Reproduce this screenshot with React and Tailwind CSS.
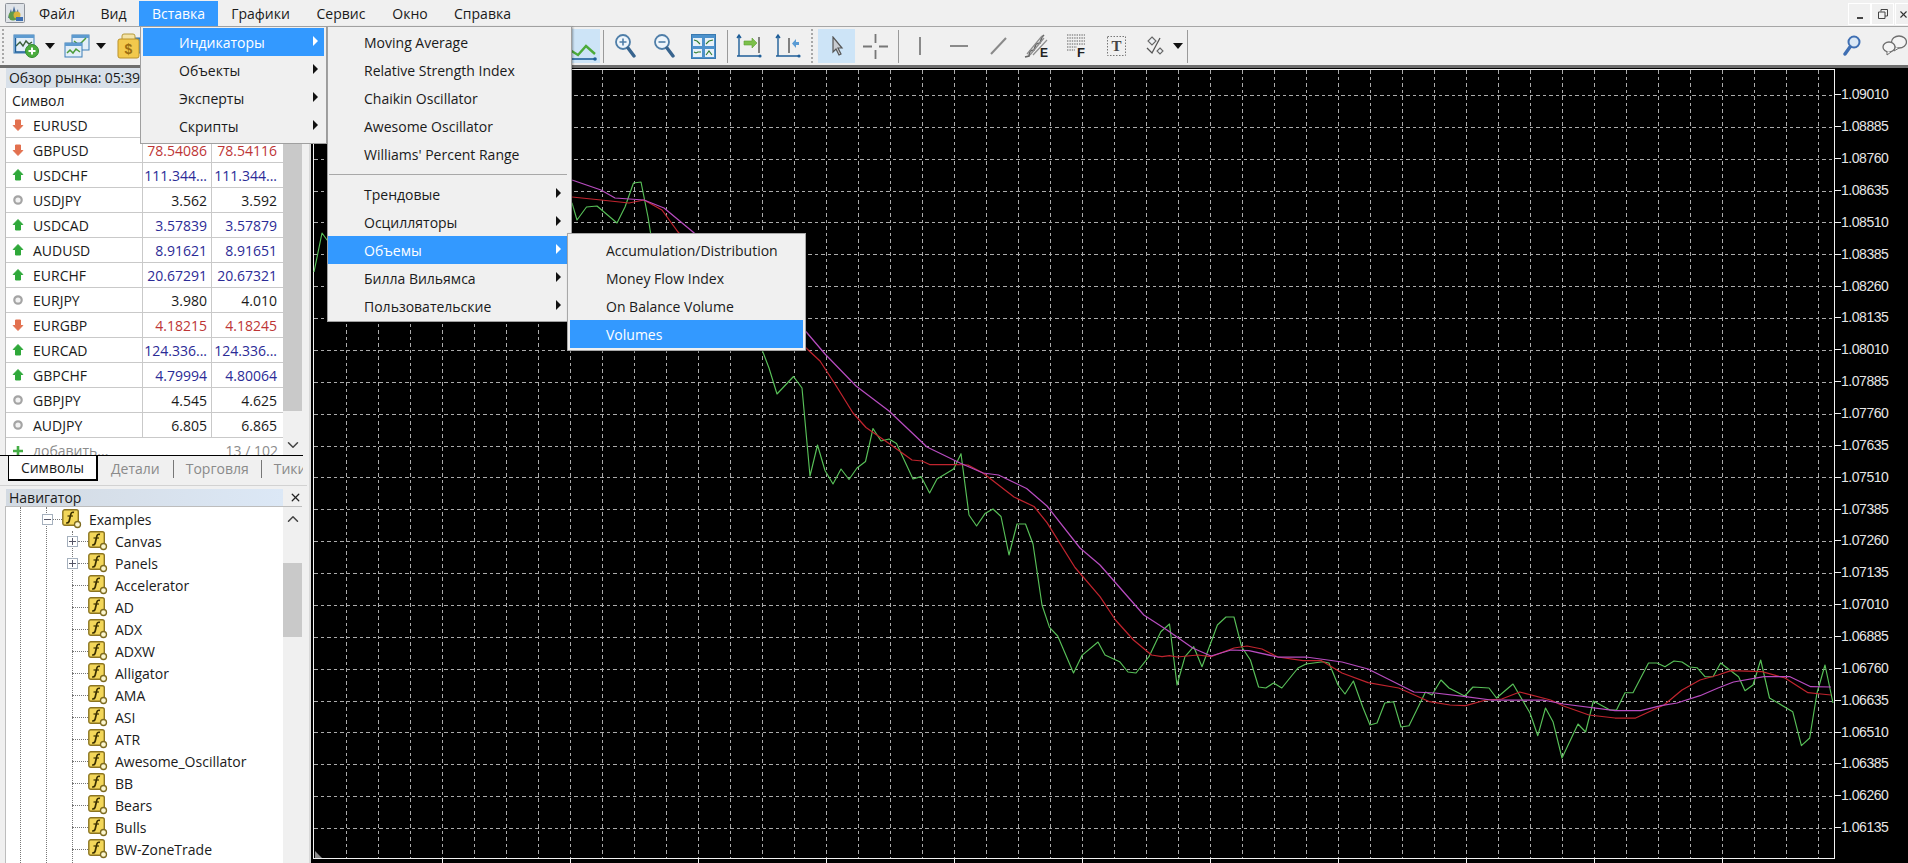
import { ChevronDown, ChevronUp, X } from "lucide-react";

const menuBar = [
  { label: "Файл", w: "w-[62px]" },
  { label: "Вид", w: "w-[51px]" },
  { label: "Вставка", w: "w-[79px]", active: true },
  { label: "Графики", w: "w-[85px]" },
  { label: "Сервис", w: "w-[76px]" },
  { label: "Окно", w: "w-[62px]" },
  { label: "Справка", w: "w-[83px]" },
];

const quotes = [
  { s: "EURUSD", dir: "down", bid: "", ask: "" },
  { s: "GBPUSD", dir: "down", bid: "78.54086", ask: "78.54116" },
  { s: "USDCHF", dir: "up", bid: "111.344...", ask: "111.344..." },
  { s: "USDJPY", dir: "flat", bid: "3.562", ask: "3.592" },
  { s: "USDCAD", dir: "up", bid: "3.57839", ask: "3.57879" },
  { s: "AUDUSD", dir: "up", bid: "8.91621", ask: "8.91651" },
  { s: "EURCHF", dir: "up", bid: "20.67291", ask: "20.67321" },
  { s: "EURJPY", dir: "flat", bid: "3.980", ask: "4.010" },
  { s: "EURGBP", dir: "down", bid: "4.18215", ask: "4.18245" },
  { s: "EURCAD", dir: "up", bid: "124.336...", ask: "124.336..." },
  { s: "GBPCHF", dir: "up", bid: "4.79994", ask: "4.80064" },
  { s: "GBPJPY", dir: "flat", bid: "4.545", ask: "4.625" },
  { s: "AUDJPY", dir: "flat", bid: "6.805", ask: "6.865" },
];

const valueColor = {
  up: "text-[#2b2b96]",
  down: "text-[#bd3535]",
  flat: "text-[#1a1a1a]",
};

const treeItems = [
  "Accelerator",
  "AD",
  "ADX",
  "ADXW",
  "Alligator",
  "AMA",
  "ASI",
  "ATR",
  "Awesome_Oscillator",
  "BB",
  "Bears",
  "Bulls",
  "BW-ZoneTrade",
];

const prices = [
  "1.09010", "1.08885", "1.08760", "1.08635", "1.08510", "1.08385", "1.08260", "1.08135",
  "1.08010", "1.07885", "1.07760", "1.07635", "1.07510", "1.07385", "1.07260", "1.07135",
  "1.07010", "1.06885", "1.06760", "1.06635", "1.06510", "1.06385", "1.06260", "1.06135",
];

const green =
  "314,272 322,233 327,240 400,200 572,203 577,220 586.5,207 597,206 617,223 625,207 633.5,183 641,182 648,217 650.6,233 700,300 761,347 769,368 777,394 793.5,376.5 802,388 810,476 817.5,445 825,470.5 833,484 841,469 849,479.5 857,468 865.5,461.5 873,428.5 881,441 889,439 896.5,443.6 913,479 921,476.6 929.6,493 937,479 953.6,469 961,453.7 969,515 976.6,526 985,513.6 993,509 1001,516.5 1009,555 1017,524 1025.5,524 1033,544 1042,605 1049.5,627.4 1057.7,636 1073.5,673 1082,655.4 1098,642 1105,655 1119.6,661.7 1128,672 1136,673 1149,656.7 1160.8,631.7 1169.5,624 1177,685 1185,656.7 1193.7,646.7 1202,666.7 1217.4,625 1226,617 1234,617 1241.6,646.7 1250.4,660 1258.6,687 1265.8,688 1273.6,683 1281.8,688 1298,668 1306,664 1313.7,663 1323,661.7 1329,663 1338,685 1345,694 1353.4,681 1362.6,706.7 1370,725 1377,723 1384.8,703 1393.5,701.7 1401,727 1409,725.7 1425.5,692 1432,695 1441,680 1449,688 1464.6,696 1473,687 1489,688 1496.5,698 1513,684 1530,713 1537.8,735.7 1545.5,708 1553,721.7 1562,758 1578,724 1585.6,732 1593.4,701 1610,710 1616.5,710 1625,692.7 1633,692.7 1648.5,663 1657,663 1665,666.7 1674,661 1682,662 1689.7,667 1697,667.7 1705,676.7 1713,676.7 1720.6,663 1738.6,676.7 1745,690.7 1753,685 1760.7,660 1769.5,698 1792.7,711.7 1801.4,745.7 1809.7,738 1817,693 1825,665 1833,703";
const red =
  "500,190 572,197 601,200 629,203 644,200 662,210 678,232 740,300 805,347 820,361 835,384 853,413 866,427.5 889,443.6 912,460 922,461 929.6,464.5 955,464.5 968,465 983,473 1014,497 1034,506.5 1047,522.6 1075,567.5 1100,596.7 1115.5,620 1133.5,640 1151.5,655 1162,656.7 1169.5,655.7 1177,657 1198,655 1211,656.7 1234,648 1247,646 1262,649 1277.7,657 1303,660.7 1321.5,660.7 1342,673 1368,682.7 1398.7,688 1429.6,701.7 1450,705 1465.6,705.7 1486,700 1501.7,699 1519.7,692 1550.6,700 1563.5,706 1589,715 1615,718 1635.6,718 1664,705 1682,690 1700,680 1718,675 1731,670.7 1762,671.7 1785,678 1808,692.7 1821,694 1831,695";
const magenta =
  "500,150 572,180 601,190 615,198 644,200 664,208 693,232 760,290 805,330.5 825,354 856,386 889,411 927,447 960,463 983,473 998.5,475 1026.6,488.5 1047,506 1080,548 1100,565 1143.8,615 1167,630 1192.7,648 1211,656 1231,650 1249,650.7 1277.7,657 1306,657 1342,662 1368,669 1414,692 1435,693 1465.6,696.7 1491,700 1543,700 1563.5,704 1615,710.7 1640.7,710.7 1661,705.7 1677,703 1700,695.7 1718,688 1733.5,682 1764,676.7 1790,676.7 1810.7,686.7 1831,687";

const vGrid = Array.from({ length: 47 }, (_, i) => Math.round(345.6 + i * 32) + 0.5);
const hGrid = prices.map((_, i) => Math.round(95 + i * 31.87) + 0.5);
const dateTicks = Array.from({ length: 11 }, (_, i) => Math.round(441.6 + i * 128) + 0.5);

const Caret = ({ className = "" }) => (
  <svg viewBox="0 0 10 6" className={`w-[10px] h-[6px] shrink-0 ${className}`}>
    <path d="M0 0h10L5 6z" fill="#111" />
  </svg>
);

const Sep = ({ className = "" }) => (
  <div className={`w-px h-[33px] shrink-0 bg-[#9a9a9a] ${className}`} />
);

const Grip = ({ className = "" }) => (
  <div className={`w-[3px] h-[34px] shrink-0 border-l-2 border-dotted border-[#a8a8a8] ${className}`} />
);

const Logo = () => (
  <svg viewBox="0 0 20 20" className="w-[20px] h-[20px] ml-[5px] shrink-0">
    <rect x="0.5" y="0.5" width="19" height="19" rx="1" fill="#dfe3e8" stroke="#8e939a" />
    <path d="M3 15 6 6l1 5 2-8 2 7 2-4 1 9z" fill="#4d6f9c" />
    <circle cx="8" cy="13" r="4.5" fill="#5f9a4b" />
    <circle cx="12" cy="12" r="3.5" fill="#d8b23c" />
    <path d="M11 14h7v4h-7z" fill="#3f6fb0" />
  </svg>
);

const NewChartIcon = () => (
  <svg viewBox="0 0 26 24" className="w-[26px] h-[24px] ml-[8px] shrink-0">
    <rect x="1" y="1" width="20" height="18" fill="#e3eef8" stroke="#3d7fb8" />
    <rect x="1" y="1" width="20" height="3" fill="#5e9bd0" />
    <path d="M3 12l4-4 3 4 3-5 3 3 3-2" fill="none" stroke="#3a5e3a" strokeWidth="1.4" />
    <path d="M2.5 4v14h17" fill="none" stroke="#1e5f9a" strokeWidth="1.4" />
    <circle cx="19" cy="17" r="6.5" fill="#4cad3e" stroke="#2f8a2a" />
    <path d="M19 13.5v7M15.5 17h7" stroke="#fff" strokeWidth="2" />
  </svg>
);

const ProfilesIcon = () => (
  <svg viewBox="0 0 26 24" className="w-[26px] h-[24px] ml-[9px] shrink-0">
    <rect x="8" y="1" width="17" height="15" fill="#e3eef8" stroke="#3d7fb8" />
    <rect x="8" y="1" width="17" height="3" fill="#5e9bd0" />
    <path d="M10 7l5 4 7-7" fill="none" stroke="#4c9c3a" strokeWidth="1.5" />
    <rect x="1" y="9" width="17" height="14" fill="#e3eef8" stroke="#3d7fb8" />
    <rect x="1" y="9" width="17" height="3" fill="#5e9bd0" />
    <path d="M3 19l3-3 3 3 3-4 4 3" fill="none" stroke="#4c9c3a" strokeWidth="1.5" />
  </svg>
);

const DollarIcon = () => (
  <svg viewBox="0 0 26 26" className="w-[26px] h-[26px] ml-[11px] shrink-0">
    <rect x="14" y="5" width="12" height="15" rx="2" fill="#4a8fc8" stroke="#2e6da3" />
    <rect x="5" y="1" width="13" height="9" rx="2" fill="#f4e3a6" stroke="#b69a3a" />
    <rect x="1" y="6" width="21" height="19" rx="2" fill="#f2c94c" stroke="#bb922a" />
    <text x="11.5" y="21" textAnchor="middle" fontSize="14" fontWeight="700" fill="#9a6d10" fontFamily="'Liberation Sans', sans-serif">$</text>
  </svg>
);

const SelectedChartIcon = () => (
  <div className="w-[34px] h-[34px] ml-[423px] shrink-0 bg-[#cde4f7] flex items-center justify-center">
    <svg viewBox="0 0 34 34" className="w-[34px] h-[34px]">
      <path d="M4 21l8 5 8-9 9 8" fill="none" stroke="#4cab3a" strokeWidth="2.4" />
      <path d="M2 30h28" stroke="#1e5f9a" strokeWidth="1.6" />
      <circle cx="29" cy="30" r="1.8" fill="#1e5f9a" />
    </svg>
  </div>
);

const Magnifier = ({ plus, className = "" }) => (
  <svg viewBox="0 0 22 26" className={`w-[22px] h-[26px] shrink-0 ${className}`}>
    <circle cx="9" cy="9" r="7" fill="#eef5fb" stroke="#4f7ea8" strokeWidth="1.8" />
    <path d="M14 15l6 8" stroke="#38648e" strokeWidth="3.4" strokeLinecap="round" />
    <path d={plus ? "M5.5 9h7M9 5.5v7" : "M5.5 9h7"} stroke="#4f7ea8" strokeWidth="1.6" />
  </svg>
);

const TileIcon = () => (
  <svg viewBox="0 0 25 25" className="w-[25px] h-[25px] ml-[16px] shrink-0">
    <rect x="0.5" y="0.5" width="24" height="24" fill="#4d92cc" stroke="#3a7ab0" />
    {[[2, 4], [14, 4], [2, 15], [14, 15]].map(([x, y]) => (
      <rect key={`${x}-${y}`} x={x} y={y} width="9" height="8" fill="#e8f1f8" />
    ))}
    <path d="M3 6l3 1 3 3M15 10l3-3 4-1M3 18l2 1 2-1 3 0M15 21l3-4 3 4" fill="none" stroke="#2f7d2f" strokeWidth="1.1" />
  </svg>
);

const ShiftIcon = ({ left, className = "" }) => (
  <svg viewBox="0 0 26 26" className={`w-[26px] h-[26px] shrink-0 ${className}`}>
    <path d="M3 2v21M1 5l2-3 2 3M1 23h24" fill="none" stroke="#1f5e98" strokeWidth="1.4" />
    <circle cx="24" cy="23" r="1.6" fill="#1f5e98" />
    {left ? (
      <>
        <path d="M14 5v15" stroke="#444" strokeWidth="1.3" />
        <path d="M24 9h-3V6l-4 4.5L21 15v-3h3z" fill="#5a9bd4" />
      </>
    ) : (
      <>
        <path d="M23 4v16" stroke="#444" strokeWidth="1.3" />
        <path d="M8 8h8V5l5 5-5 5v-3H8z" fill="#7cc04a" stroke="#5a9e30" strokeWidth="0.6" />
      </>
    )}
  </svg>
);

const SelectedCursor = () => (
  <div className="w-[37px] h-[34px] ml-[4px] shrink-0 bg-[#cde4f7] flex items-center justify-center">
    <svg viewBox="0 0 14 20" className="w-[14px] h-[20px]">
      <path d="M3 1v15l3-3 3 6 2-1-3-6h4z" fill="#c8ccd2" stroke="#555" strokeWidth="1.2" />
    </svg>
  </div>
);

const CrossIcon = () => (
  <svg viewBox="0 0 25 25" className="w-[25px] h-[25px] ml-[8px] shrink-0">
    <path d="M12.5 0v9M12.5 16v9M0 12.5h9M16 12.5h9" stroke="#777" strokeWidth="1.8" />
  </svg>
);

const FibIcon = () => (
  <svg viewBox="0 0 26 26" className="w-[26px] h-[26px] ml-[17px] shrink-0">
    <path d="M1 24l4-1 1-5 4-1 2-6 4-1 2-6 2-2" fill="none" stroke="#666" strokeWidth="1.6" />
    <path d="M3 21L18 3M6 22L20 5M9 22L23 7" stroke="#8e8e8e" strokeWidth="1.2" />
    <text x="20" y="24" textAnchor="middle" fontSize="12" fontWeight="700" fill="#222" fontFamily="'Liberation Sans', sans-serif">E</text>
  </svg>
);

const FiboGridIcon = () => (
  <svg viewBox="0 0 19 26" className="w-[19px] h-[26px] ml-[17px] shrink-0">
    <path d="M0 2h18M0 5h18M0 8h18M0 11h18M0 14h10M0 17h8" stroke="#8e8e8e" strokeWidth="1.6" strokeDasharray="1.4 1" />
    <text x="14" y="24" textAnchor="middle" fontSize="13" fontWeight="700" fill="#222" fontFamily="'Liberation Sans', sans-serif">F</text>
  </svg>
);

const TextIcon = () => (
  <svg viewBox="0 0 19 22" className="w-[19px] h-[22px] ml-[21px] shrink-0">
    <rect x="0.5" y="1.500" width="18" height="19" fill="none" stroke="#777" strokeDasharray="1.5 1.5" />
    <text x="9.5" y="16" textAnchor="middle" fontSize="15" fontWeight="700" fill="#444" fontFamily="'Liberation Serif', serif">T</text>
  </svg>
);

const MoreIcon = () => (
  <svg viewBox="0 0 18 20" className="w-[18px] h-[20px] ml-[20px] shrink-0">
    <path d="M6 1l4 4-4 4-4-4zM14 12l3 3-3 3-3-3z" fill="#eef1f4" stroke="#666" strokeWidth="1.1" />
    <path d="M1 12l5 5 8-15" fill="none" stroke="#555" strokeWidth="1.3" />
  </svg>
);

const SearchIcon = () => (
  <svg viewBox="0 0 18 22" className="w-[18px] h-[22px] ml-auto shrink-0">
    <circle cx="11" cy="7" r="5.5" fill="#dbe8f5" stroke="#3f6fb3" strokeWidth="2" />
    <path d="M7 12l-5 7" stroke="#3f6fb3" strokeWidth="3.4" strokeLinecap="round" />
  </svg>
);

const ChatIcon = () => (
  <svg viewBox="0 0 25 22" className="w-[25px] h-[22px] ml-[21px] shrink-0">
    <ellipse cx="17" cy="7" rx="7.5" ry="6" fill="#f4f4f4" stroke="#6e6e6e" strokeWidth="1.3" />
    <path d="M13 12l-1 4 5-3" fill="#f4f4f4" stroke="#6e6e6e" />
    <ellipse cx="7" cy="12" rx="6" ry="5" fill="#f4f4f4" stroke="#6e6e6e" strokeWidth="1.3" />
    <path d="M5 16l0 4 4-3" fill="#f4f4f4" stroke="#6e6e6e" />
  </svg>
);

const FuncIcon = () => (
  <svg viewBox="0 0 20 20" className="w-[20px] h-[20px] shrink-0">
    <rect x="0.8" y="0.8" width="15.5" height="15.5" rx="2" fill="#f3d75a" stroke="#8b7420" strokeWidth="1.4" />
    <path d="M12 3.4C9.6 2.8 9 4 8.5 6.5L7.2 12c-.4 1.7-1.3 2.2-3 1.8" fill="none" stroke="#3b3000" strokeWidth="1.7" />
    <path d="M5.5 7H11" stroke="#3b3000" strokeWidth="1.2" />
    <circle cx="15.5" cy="15.5" r="3" fill="#fbf6cf" stroke="#7d6a1e" strokeWidth="1.3" />
  </svg>
);

const StatusIcon = ({ dir }) => {
  if (dir === "flat") {
    return (
      <svg viewBox="0 0 12 12" className="w-[12px] h-[12px] ml-[6px] shrink-0">
        <circle cx="6" cy="6" r="3.7" fill="#f2f2f2" stroke="#a4a4a4" strokeWidth="2.2" />
      </svg>
    );
  }
  return (
    <svg viewBox="0 0 12 14" className="w-[12px] h-[14px] ml-[6px] shrink-0">
      {dir === "up" ? (
        <path d="M6 1.500l4.800 5H8.500v5.500h-5V6.500H1.200z" fill="#2fa83a" stroke="#2fa83a" strokeLinejoin="round" />
      ) : (
        <path d="M6 12.500l4.800-5H8.500V2h-5v5.500H1.200z" fill="#e2704f" stroke="#e2704f" strokeLinejoin="round" />
      )}
    </svg>
  );
};

const ItemArrow = ({ active }) => (
  <svg viewBox="0 0 5 10" className="w-[5px] h-[10px] ml-auto mr-[6px] mb-[3px] shrink-0">
    <path d="M0 0l5 5-5 5z" fill={active ? "#fff" : "#111"} />
  </svg>
);

const MenuItem = ({ label, active, arrow }) => (
  <div
    className={`h-[28px] flex items-center pl-[36px] ${
      active ? "bg-[#3399ff] text-white" : "text-[#1a1a1a]"
    }`}
  >
    <span>{label}</span>
    {arrow && <ItemArrow active={active} />}
  </div>
);

const QuoteRow = ({ s, dir, bid, ask }) => (
  <div className="h-[25px] grid grid-cols-[137px_69px_70px] border-b border-[#c9c9c9] items-stretch">
    <div className="flex items-center gap-[9px] border-r border-[#c9c9c9]">
      <StatusIcon dir={dir} />
      <span className="text-[#1a1a1a]">{s}</span>
    </div>
    <div className={`flex items-center justify-end pr-[4px] border-r border-[#c9c9c9] ${valueColor[dir]}`}>{bid}</div>
    <div className={`flex items-center justify-end pr-[5px] ${valueColor[dir]}`}>{ask}</div>
  </div>
);

const TreeRow = ({ label, expand, root }) => (
  <div className="h-[22px] flex items-center">
    <div className={`shrink-0 ${root ? "w-[36px]" : expand ? "w-[61px]" : "w-[66px]"}`} />
    {expand || root ? (
      <div className="w-[11px] h-[11px] shrink-0 border border-[#a5b0bd] bg-white flex items-center justify-center relative">
        <div className="w-[7px] h-px bg-[#556]" />
        {!root && <div className="absolute w-px h-[7px] bg-[#556]" />}
      </div>
    ) : null}
    <div className={`shrink-0 border-t border-dotted border-[#777] ${root ? "w-[9px]" : expand ? "w-[10px]" : "w-[16px]"}`} />
    <FuncIcon />
    <span className="ml-[7px] text-[#1a1a1a] whitespace-nowrap">{label}</span>
  </div>
);

const Toolbar = () => (
  <div className="h-[38px] flex items-center pr-px">
    <Grip className="ml-[2px]" />
    <NewChartIcon />
    <Caret className="ml-[6px]" />
    <ProfilesIcon />
    <Caret className="ml-[6px]" />
    <DollarIcon />
    <SelectedChartIcon />
    <Sep className="ml-[3px]" />
    <Magnifier plus className="ml-[10px]" />
    <Magnifier className="ml-[17px]" />
    <TileIcon />
    <Sep className="ml-[11px]" />
    <ShiftIcon className="ml-[8px]" />
    <ShiftIcon left className="ml-[13px]" />
    <Grip className="ml-[10px]" />
    <SelectedCursor />
    <CrossIcon />
    <Sep className="ml-[10px]" />
    <svg viewBox="0 0 10 20" className="w-[10px] h-[20px] ml-[16px] shrink-0">
      <path d="M5 1v18" stroke="#8a8a8a" strokeWidth="2" />
    </svg>
    <svg viewBox="0 0 18 4" className="w-[18px] h-[4px] ml-[25px] shrink-0">
      <path d="M0 2h18" stroke="#8a8a8a" strokeWidth="2" />
    </svg>
    <svg viewBox="0 0 17 18" className="w-[17px] h-[18px] ml-[22px] shrink-0">
      <path d="M1 17L16 1" stroke="#8a8a8a" strokeWidth="2" />
    </svg>
    <FibIcon />
    <FiboGridIcon />
    <TextIcon />
    <MoreIcon />
    <Caret className="ml-[9px]" />
    <Sep className="ml-[4px]" />
    <SearchIcon />
    <ChatIcon />
  </div>
);

const MarketWatch = () => (
  <div className="h-[417px] shrink-0">
    <div className="h-[20px] ml-[6px] mr-[4px] flex items-center pl-[3px] pb-px bg-[#d8e0e9] text-[#1a1a1a] whitespace-nowrap tracking-[-0.1px]">
      Обзор рынка: 05:39
    </div>
    <div className="h-[367px] ml-[5px] mr-[6px] flex overflow-hidden border-l border-[#bdbdbd]">
      <div className="w-[277px] shrink-0 bg-white">
        <div className="h-[25px] grid grid-cols-[137px_69px_70px] border-b border-[#c9c9c9]">
          <div className="flex items-center pl-[6px] text-[#1a1a1a]">Символ</div>
        </div>
        {quotes.map((q) => (
          <QuoteRow key={q.s} {...q} />
        ))}
        <div className="h-[25px] flex items-center">
          <svg viewBox="0 0 12 12" className="w-[12px] h-[12px] ml-[6px] shrink-0">
            <path d="M6 1v10M1 6h10" stroke="#45ad45" strokeWidth="2.6" />
          </svg>
          <span className="ml-[9px] text-[#8c8c8c]">добавить...</span>
          <span className="ml-auto mr-[5px] text-[#8c8c8c]">13 / 102</span>
        </div>
      </div>
      <div className="w-[19px] shrink-0 flex flex-col">
        <div className="h-[323px] bg-[#c9c9c9]" />
        <div className="flex-1 flex items-start justify-center pt-[25px]">
          <ChevronDown size={18} strokeWidth={2} className="text-[#444]" />
        </div>
      </div>
    </div>
    <div className="h-[26px] mr-[6px] flex items-start border-t border-black overflow-hidden text-[#8a8a8a] whitespace-nowrap">
      <div className="w-[90px] h-[25px] ml-[8px] shrink-0 bg-white border-l border-r-2 border-b-2 border-black flex items-center justify-center text-[#1a1a1a]">
        Символы
      </div>
      <span className="ml-[13px] leading-[25px]">Детали</span>
      <div className="w-px h-[18px] mt-[4px] ml-[13px] bg-[#777] shrink-0" />
      <span className="ml-[12px] leading-[25px]">Торговля</span>
      <div className="w-px h-[18px] mt-[4px] ml-[12px] bg-[#777] shrink-0" />
      <span className="ml-[12px] leading-[25px]">Тики</span>
    </div>
  </div>
);

const Navigator = () => (
  <div className="flex-1 flex flex-col min-h-0 border-t border-[#d2d2d2] mr-[2px]">
    <div className="h-[17px] mt-[3px] ml-[6px] mr-[24px] flex items-center pl-[3px] bg-linear-to-r from-[#d3dae2] to-[#dce8f6] text-[#1a1a1a] shrink-0">
      Навигатор
      <X size={13} strokeWidth={2.4} className="absolute left-[289px] text-[#222]" />
    </div>
    <div className="flex-1 flex ml-[5px] mr-[5px] border-l border-t border-[#bdbdbd] overflow-hidden">
      <div className="w-[277px] shrink-0 bg-white relative overflow-hidden pt-px">
        <div className="absolute left-[14px] top-0 bottom-0 border-l border-dotted border-[#777]" />
        <div className="absolute left-[40px] top-0 bottom-0 border-l border-dotted border-[#777]" />
        <div className="absolute left-[66px] top-[24px] bottom-0 border-l border-dotted border-[#777]" />
        <div className="relative">
          <TreeRow label="Examples" root />
          <TreeRow label="Canvas" expand />
          <TreeRow label="Panels" expand />
          {treeItems.map((t) => (
            <TreeRow key={t} label={t} />
          ))}
        </div>
      </div>
      <div className="w-[19px] shrink-0 flex flex-col items-center">
        <ChevronUp size={18} strokeWidth={2} className="text-[#444] mt-[3px]" />
        <div className="w-full h-[74px] mt-[35px] bg-[#c9c9c9]" />
      </div>
    </div>
  </div>
);

const Chart = () => (
  <div className="flex-1 flex bg-black min-w-0 h-[795px]">
    <svg viewBox="311 68 1524 795" className="w-[1524px] h-[795px] block shrink-0">
      <g shapeRendering="crispEdges" stroke="#ababab" strokeWidth="1" strokeDasharray="3.500 3">
        {hGrid.map((y) => (
          <line key={y} x1="314" x2="1834" y1={y} y2={y} />
        ))}
        {vGrid.map((x) => (
          <line key={x} x1={x} x2={x} y1="70" y2="858" />
        ))}
      </g>
      <path d="M313.500 69.500H1834.500V858.500H313.500z" fill="none" stroke="#f2f2f2" shapeRendering="crispEdges" />
      {dateTicks.map((x) => (
        <line key={x} x1={x} x2={x} y1="858" y2="863" stroke="#f2f2f2" shapeRendering="crispEdges" />
      ))}
      <path d="M315 851l7 7h-7z" fill="#8a8a8a" />
      <polyline points={green} fill="none" stroke="#58c058" strokeWidth="1.15" strokeLinejoin="round" />
      <polyline points={red} fill="none" stroke="#c0242e" strokeWidth="1.25" strokeLinejoin="round" />
      <polyline points={magenta} fill="none" stroke="#b84cc0" strokeWidth="1.25" strokeLinejoin="round" />
    </svg>
    <div className="flex-1 pt-[11px] overflow-hidden text-[#e6e6e6] font-['Liberation_Sans',sans-serif] text-[14px] tracking-[-0.45px]">
      {prices.map((p) => (
        <div key={p} className="h-[31.87px] flex items-center">
          <div className="w-[6px] h-px bg-[#f2f2f2]" />
          {p}
        </div>
      ))}
    </div>
  </div>
);

export default function App() {
  return (
    <div className="relative w-[1908px] h-[863px] overflow-hidden flex flex-col bg-[#f0f0f0] font-['Open_Sans','Liberation_Sans',sans-serif] text-[14px]">
      <div className="h-[27px] shrink-0 flex items-center border-b border-[#a6a6a6]">
        <Logo />
        <div className="ml-px flex h-full items-start pt-px">
          {menuBar.map((m) => (
            <div
              key={m.label}
              className={`h-[25px] flex items-center justify-center ${m.w} ${
                m.active ? "bg-[#3399ff] text-white" : "text-[#1a1a1a]"
              }`}
            >
              {m.label}
            </div>
          ))}
        </div>
        <div className="ml-auto flex self-start mt-[3px] h-[22px] text-[#333]">
          <div className="w-[23px] border border-white flex items-end justify-center pb-[5px]">
            <div className="w-[6px] h-[2px] bg-[#444]" />
          </div>
          <div className="w-[23px] border border-white flex items-center justify-center">
            <svg viewBox="0 0 10 10" className="w-[10px] h-[10px]">
              <path d="M3 2.500V.5h6.500V7H7M.5 3h6.500v6.500H.5z" fill="none" stroke="#444" />
            </svg>
          </div>
          <div className="w-[13px] ml-[1px] border border-white border-r-0 flex items-center pl-[2px] overflow-hidden">
            <X size={11} strokeWidth={2.4} className="shrink-0" />
          </div>
        </div>
      </div>

      <Toolbar />
      <div className="h-[3px] shrink-0 bg-[#6e6e6e]" />

      <div className="flex-1 flex min-h-0">
        <div className="w-[311px] shrink-0 flex flex-col border-r-2 border-[#d9d9d9]">
          <MarketWatch />
          <Navigator />
        </div>
        <Chart />
      </div>

      <div className="absolute left-[140px] top-[26px] w-[187px] h-[118px] bg-[#f0f0f0] border border-[#a0a0a0] pt-px px-[2px]">
        <MenuItem label="Индикаторы" active arrow />
        <MenuItem label="Объекты" arrow />
        <MenuItem label="Эксперты" arrow />
        <MenuItem label="Скрипты" arrow />
      </div>

      <div className="absolute left-[327px] top-[26px] w-[245px] bg-[#f0f0f0] border border-[#a0a0a0] pt-px pb-px pr-[4px] shadow-[1px_1px_2px_rgba(0,0,0,0.35)]">
        <MenuItem label="Moving Average" />
        <MenuItem label="Relative Strength Index" />
        <MenuItem label="Chaikin Oscillator" />
        <MenuItem label="Awesome Oscillator" />
        <MenuItem label="Williams' Percent Range" />
        <div className="h-[12px] flex items-center pl-px">
          <div className="h-px w-full bg-[#a8a8a8]" />
        </div>
        <MenuItem label="Трендовые" arrow />
        <MenuItem label="Осцилляторы" arrow />
        <MenuItem label="Объемы" active arrow />
        <MenuItem label="Билла Вильямса" arrow />
        <MenuItem label="Пользовательские" arrow />
      </div>

      <div className="absolute left-[567px] top-[233px] w-[239px] bg-[#f0f0f0] border border-[#a8a8a8] pt-[2px] pb-[2px] px-[2px] shadow-[1px_1px_2px_rgba(0,0,0,0.35)]">
        <MenuItem label="Accumulation/Distribution" />
        <MenuItem label="Money Flow Index" />
        <MenuItem label="On Balance Volume" />
        <MenuItem label="Volumes" active />
      </div>
    </div>
  );
}
